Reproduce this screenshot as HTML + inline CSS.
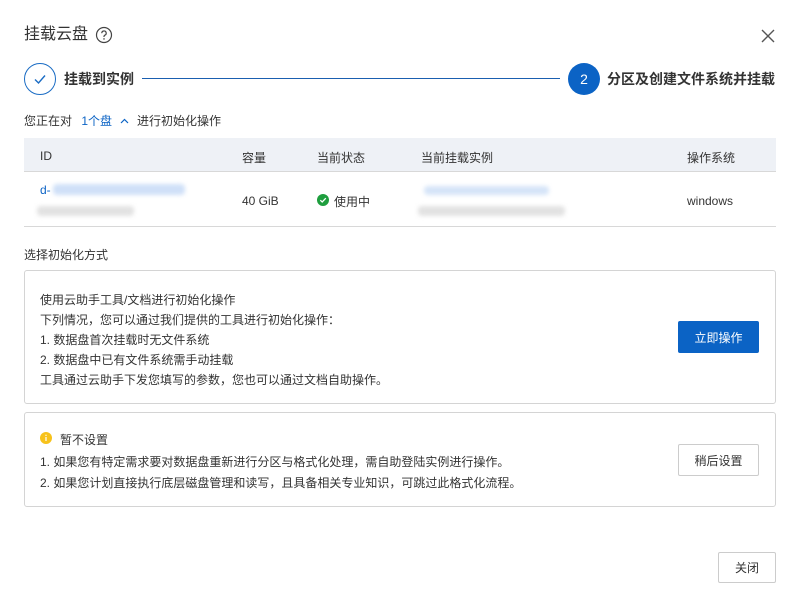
<!DOCTYPE html>
<html><head><meta charset="utf-8"><style>
*{margin:0;padding:0;box-sizing:border-box}
body{width:801px;height:605px;background:#fff;font-family:"Liberation Sans","Noto Sans CJK SC",sans-serif;color:#333;font-size:12px;position:relative;overflow:hidden}
.a{position:absolute;white-space:nowrap}
.blur{position:absolute;border-radius:4px;filter:blur(2px)}
.box{position:absolute;left:24px;width:752px;border:1px solid #d4d4d4;border-radius:3px}
.btn{position:absolute;display:flex;align-items:center;justify-content:center;font-size:12px;border-radius:2px}
</style></head><body>
<div class="a" style="left:24px;top:25px;font-size:16px;color:#333;line-height:20px">挂载云盘</div>
<svg class="a" style="left:95px;top:26px" width="18" height="18" viewBox="0 0 18 18"><circle cx="9" cy="9" r="7.5" fill="none" stroke="#444" stroke-width="1.2"/><path d="M6.8 7.2a2.2 2.2 0 1 1 3 2c-.6.3-.8.7-.8 1.3v.5" fill="none" stroke="#444" stroke-width="1.2"/><circle cx="9" cy="12.9" r=".8" fill="#444"/></svg>
<svg class="a" style="left:760px;top:28px" width="16" height="16" viewBox="0 0 16 16"><path d="M2 2L14 14M14 2L2 14" stroke="#555" stroke-width="1.4"/></svg>

<div class="a" style="left:24px;top:63px;width:32px;height:32px;border:1.5px solid #1a6cc4;border-radius:50%"></div>
<svg class="a" style="left:32px;top:71px" width="16" height="16" viewBox="0 0 16 16"><path d="M3 8.5L6.5 12L13 4.5" fill="none" stroke="#1a6cc4" stroke-width="1.4"/></svg>
<div class="a" style="left:64px;top:70px;font-size:14px;font-weight:bold;line-height:18px">挂载到实例</div>
<div class="a" style="left:142px;top:78px;width:418px;height:1px;background:#1a5fb0"></div>
<div class="a" style="left:568px;top:63px;width:32px;height:32px;background:#0b63c5;border-radius:50%;color:#fff;font-size:14px;display:flex;align-items:center;justify-content:center">2</div>
<div class="a" style="left:607px;top:70px;font-size:14px;font-weight:bold;line-height:18px">分区及创建文件系统并挂载</div>

<div class="a" style="left:24px;top:114px;line-height:14px">您正在对 <span style="color:#0b63c5;margin-left:6px">1个盘</span><svg style="margin:0 8px 1px 8px;vertical-align:middle" width="9" height="6" viewBox="0 0 9 6"><path d="M1 5L4.5 1.5L8 5" fill="none" stroke="#0b63c5" stroke-width="1.2"/></svg>进行初始化操作</div>

<div class="a" style="left:24px;top:138px;width:752px;height:34px;background:#eef1f6;border-bottom:1px solid #d8d8d8"></div>
<div class="a" style="left:40px;top:149px">ID</div>
<div class="a" style="left:242px;top:149px">容量</div>
<div class="a" style="left:317px;top:149px">当前状态</div>
<div class="a" style="left:421px;top:149px">当前挂载实例</div>
<div class="a" style="left:687px;top:149px">操作系统</div>
<div class="a" style="left:24px;top:226px;width:752px;height:1px;background:#d8d8d8"></div>
<div class="a" style="left:40px;top:183px;color:#0b63c5">d-</div>
<div class="blur" style="left:53px;top:184px;width:132px;height:11px;background:#cfe0f8"></div>
<div class="blur" style="left:37px;top:206px;width:97px;height:10px;background:#e2e2e2"></div>
<div class="a" style="left:242px;top:194px">40 GiB</div>
<svg class="a" style="left:317px;top:194px" width="12" height="12" viewBox="0 0 12 12"><circle cx="6" cy="6" r="6" fill="#1e9e3e"/><path d="M3.3 6.2L5.2 8L8.8 4.2" fill="none" stroke="#fff" stroke-width="1.3"/></svg>
<div class="a" style="left:334px;top:193px">使用中</div>
<div class="blur" style="left:424px;top:186px;width:125px;height:9px;background:#d5e4f8"></div>
<div class="blur" style="left:418px;top:206px;width:147px;height:10px;background:#e2e2e2"></div>
<div class="a" style="left:687px;top:194px">windows</div>

<div class="a" style="left:24px;top:246px">选择初始化方式</div>
<div class="box" style="top:270px;height:134px"></div>
<div class="a" style="left:40px;top:290px;line-height:20px;color:#333">使用云助手工具/文档进行初始化操作<br>下列情况，您可以通过我们提供的工具进行初始化操作：<br>1. 数据盘首次挂载时无文件系统<br>2. 数据盘中已有文件系统需手动挂载<br>工具通过云助手下发您填写的参数，您也可以通过文档自助操作。</div>
<div class="btn" style="left:678px;top:321px;width:81px;height:32px;background:#0b63c5;color:#fff">立即操作</div>

<div class="box" style="top:412px;height:95px"></div>
<svg class="a" style="left:40px;top:432px" width="12" height="12" viewBox="0 0 12 12"><circle cx="6" cy="6" r="6" fill="#f7c21b"/><rect x="5.4" y="5" width="1.2" height="4" fill="#fff"/><circle cx="6" cy="3.3" r=".7" fill="#fff"/></svg>
<div class="a" style="left:60px;top:431px">暂不设置</div>
<div class="a" style="left:40px;top:452px;line-height:21px">1. 如果您有特定需求要对数据盘重新进行分区与格式化处理，需自助登陆实例进行操作。<br>2. 如果您计划直接执行底层磁盘管理和读写，且具备相关专业知识，可跳过此格式化流程。</div>
<div class="btn" style="left:678px;top:444px;width:81px;height:32px;border:1px solid #ccc;background:#fff;color:#333">稍后设置</div>

<div class="btn" style="left:718px;top:552px;width:58px;height:31px;border:1px solid #ccc;background:#fff;color:#333">关闭</div>
</body></html>
